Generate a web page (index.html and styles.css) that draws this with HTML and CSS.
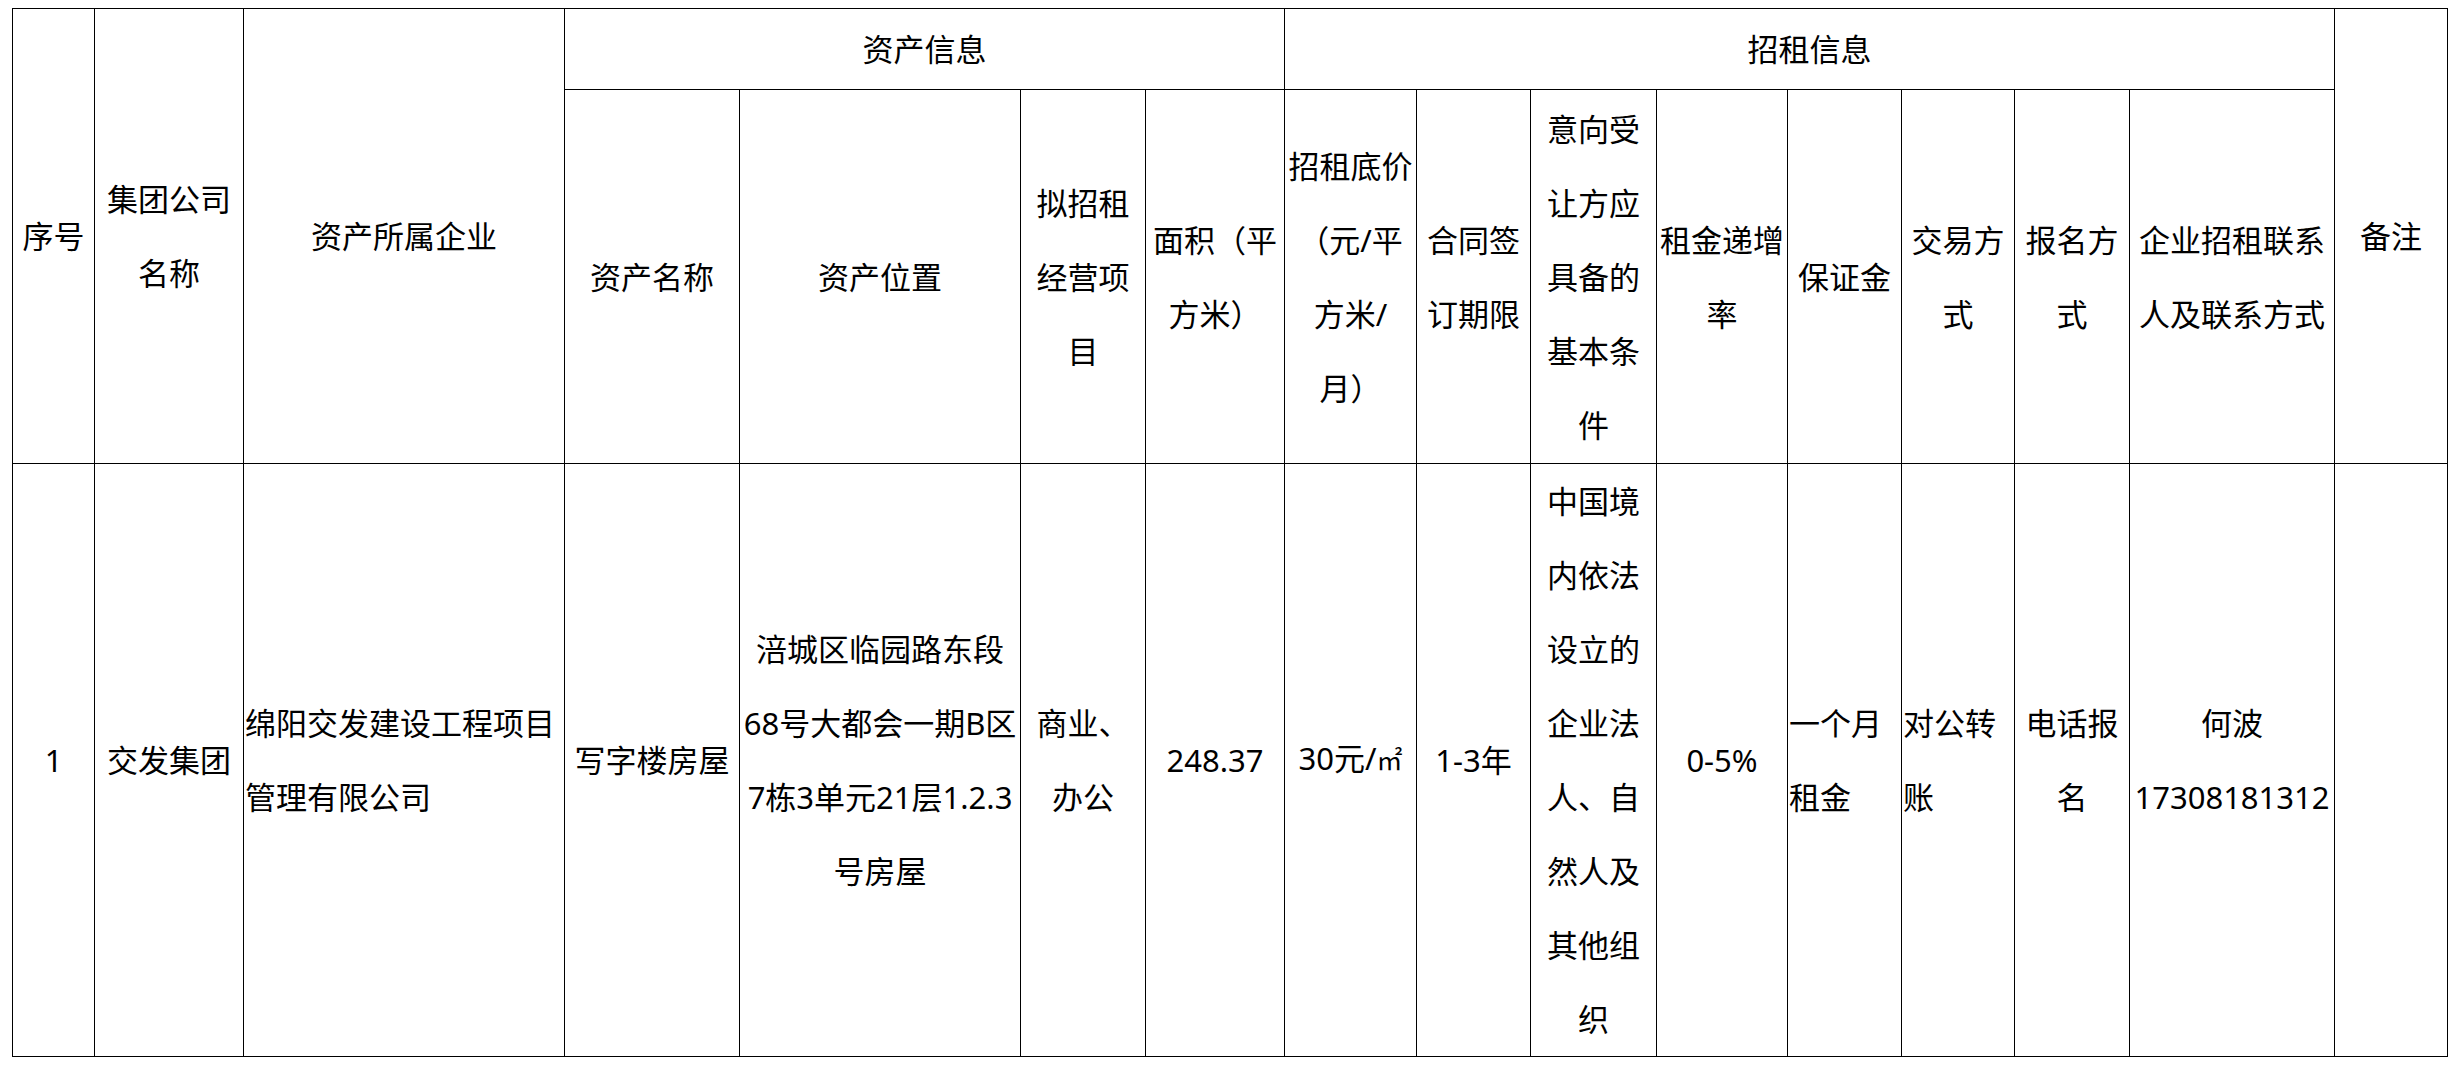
FILE: index.html
```html
<!DOCTYPE html>
<html lang="zh-CN">
<head>
<meta charset="utf-8">
<title>招租信息表</title>
<link rel="stylesheet" href="styles.css">
</head>
<body>
<table class="sheet">
  <colgroup>
    <col class="w82"><col class="w149"><col class="w321"><col class="w175">
    <col class="w281"><col class="w125"><col class="w139"><col class="w132">
    <col class="w114"><col class="w126"><col class="w131"><col class="w114">
    <col class="w113"><col class="w115"><col class="w205"><col class="w113">
  </colgroup>
  <thead>
    <tr class="r1">
      <th rowspan="2">序号</th>
      <th rowspan="2">集团公司<br>名称</th>
      <th rowspan="2">资产所属企业</th>
      <th colspan="4">资产信息</th>
      <th colspan="8">招租信息</th>
      <th rowspan="2">备注</th>
    </tr>
    <tr class="r2">
      <th>资产名称</th>
      <th>资产位置</th>
      <th>拟招租<br>经营项<br>目</th>
      <th>面积（平<br>方米）</th>
      <th>招租底价<br>（元/平<br>方米/<br>月）</th>
      <th>合同签<br>订期限</th>
      <th>意向受<br>让方应<br>具备的<br>基本条<br>件</th>
      <th>租金递增<br>率</th>
      <th>保证金</th>
      <th>交易方<br>式</th>
      <th>报名方<br>式</th>
      <th>企业招租联系<br>人及联系方式</th>
    </tr>
  </thead>
  <tbody>
    <tr class="r3">
      <td>1</td>
      <td>交发集团</td>
      <td class="left">绵阳交发建设工程项目<br>管理有限公司</td>
      <td>写字楼房屋</td>
      <td>涪城区临园路东段<br>68号大都会一期B区<br>7栋3单元21层1.2.3<br>号房屋</td>
      <td>商业、<br>办公</td>
      <td>248.37</td>
      <td>30元/<span class="unit">㎡</span></td>
      <td>1-3年</td>
      <td>中国境<br>内依法<br>设立的<br>企业法<br>人、自<br>然人及<br>其他组<br>织</td>
      <td>0-5%</td>
      <td class="left">一个月<br>租金</td>
      <td class="left">对公转<br>账</td>
      <td>电话报<br>名</td>
      <td>何波<br>17308181312</td>
      <td></td>
    </tr>
  </tbody>
</table>
</body>
</html>
```

FILE: styles.css
```css
html, body {
  margin: 0;
  padding: 0;
  background: #ffffff;
}

body {
  padding: 8px 0 0 12px;
}

.sheet {
  border-collapse: collapse;
  table-layout: fixed;
  width: 2436px;
  font-family: "Noto Sans", "Noto Sans CJK SC", sans-serif;
  font-size: 31px;
  line-height: 74px;
  color: #000000;
}

.sheet th,
.sheet td {
  border: 1px solid #000000;
  padding: 0 1px;
  text-align: center;
  vertical-align: middle;
  font-weight: normal;
  white-space: nowrap;
  overflow: hidden;
}

.sheet td.left {
  text-align: left;
}

.r1 { height: 81px; }
.r2 { height: 374px; }
.r3 { height: 593px; }

.unit {
  font-family: "Liberation Serif", "Noto Sans CJK SC", serif;
  font-size: 26px;
}

.w82 { width: 82px; }
.w149 { width: 149px; }
.w321 { width: 321px; }
.w175 { width: 175px; }
.w281 { width: 281px; }
.w125 { width: 125px; }
.w139 { width: 139px; }
.w132 { width: 132px; }
.w114 { width: 114px; }
.w126 { width: 126px; }
.w131 { width: 131px; }
.w113 { width: 113px; }
.w115 { width: 115px; }
.w205 { width: 205px; }
```
